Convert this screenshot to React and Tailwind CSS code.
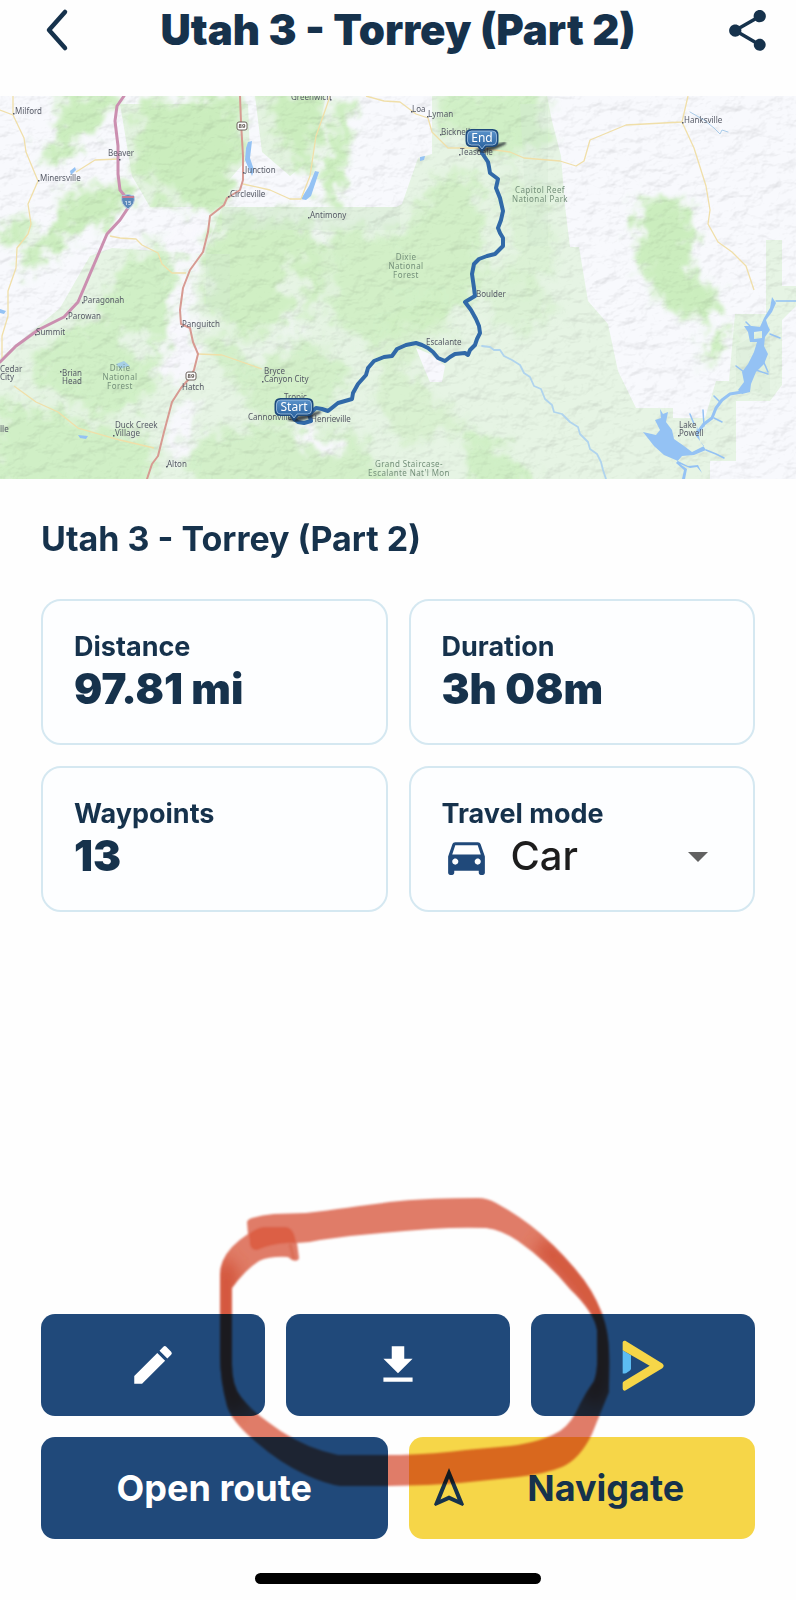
import React, { useState } from 'react';
import {
  MdArrowDropDown,
  MdDirectionsCar,
  MdDownload,
  MdEdit,
  MdOutlineNavigation,
  MdShare,
} from 'react-icons/md';

const ROUTE_NAME = 'Utah 3 - Torrey (Part 2)';

const stats = [
  { label: 'Distance', value: '97.81 mi' },
  { label: 'Duration', value: '3h 08m' },
  { label: 'Waypoints', value: '13' },
];

const towns = [
  { x: 15, y: 18, name: 'Milford' },
  { x: 40, y: 85, name: 'Minersville' },
  { x: 108, y: 60, name: 'Beaver' },
  { x: 291, y: 4, name: 'Greenwich' },
  { x: 245, y: 77, name: 'Junction' },
  { x: 230, y: 101, name: 'Circleville' },
  { x: 310, y: 122, name: 'Antimony' },
  { x: 412, y: 16, name: 'Loa' },
  { x: 428, y: 21, name: 'Lyman' },
  { x: 441, y: 39, name: 'Bicknell' },
  { x: 460, y: 59, name: 'Teasdale' },
  { x: 684, y: 27, name: 'Hanksville' },
  { x: 83, y: 207, name: 'Paragonah' },
  { x: 68, y: 223, name: 'Parowan' },
  { x: 36, y: 239, name: 'Summit' },
  { x: 0, y: 276, name: 'Cedar' },
  { x: 0, y: 284, name: 'City' },
  { x: 62, y: 280, name: 'Brian' },
  { x: 62, y: 288, name: 'Head' },
  { x: 182, y: 231, name: 'Panguitch' },
  { x: 182, y: 294, name: 'Hatch' },
  { x: 264, y: 278, name: 'Bryce' },
  { x: 264, y: 286, name: 'Canyon City' },
  { x: 284, y: 304, name: 'Tropic' },
  { x: 248, y: 324, name: 'Cannonville' },
  { x: 311, y: 326, name: 'Henrieville' },
  { x: 115, y: 332, name: 'Duck Creek' },
  { x: 115, y: 340, name: 'Village' },
  { x: 0, y: 336, name: 'lle' },
  { x: 167, y: 371, name: 'Alton' },
  { x: 476, y: 201, name: 'Boulder' },
  { x: 426, y: 249, name: 'Escalante' },
  { x: 679, y: 332, name: 'Lake' },
  { x: 679, y: 340, name: 'Powell' },
];

const parks = [
  { x: 120, y: 275, name: 'Dixie' },
  { x: 120, y: 284, name: 'National' },
  { x: 120, y: 293, name: 'Forest' },
  { x: 406, y: 164, name: 'Dixie' },
  { x: 406, y: 173, name: 'National' },
  { x: 406, y: 182, name: 'Forest' },
  { x: 540, y: 97, name: 'Capitol Reef' },
  { x: 540, y: 106, name: 'National Park' },
  { x: 409, y: 371, name: 'Grand Staircase-' },
  { x: 409, y: 380, name: "Escalante Nat'l Mon" },
];

const townDots = [
  [13, 17], [38, 84], [119, 63], [243, 76], [228, 100], [308, 121], [411, 15], [427, 20],
  [440, 38], [459, 58], [682, 26], [82, 206], [66, 222], [35, 238], [60, 275], [181, 230],
  [262, 285], [113, 339], [166, 370], [678, 339], [330, 3],
];

function Marker({ x, y, width, text }) {
  const half = width / 2;
  return (
    <g transform={`translate(${x} ${y})`}>
      <path d={`M-6 1 L${half + 8} -6 L${half - 2} -1 L2 3 Z`} fill="#1e242b" stroke="#1e242b" strokeWidth="2" opacity="0.8" filter="url(#soft1)" />
      <path
        d={`M${-half + 5} -19 H${half - 5} Q${half} -19 ${half} -14 V-8 Q${half} -3 ${half - 5} -3 H4 L0 2 L-4 -3 H${-half + 5} Q${-half} -3 ${-half} -8 V-14 Q${-half} -19 ${-half + 5} -19 Z`}
        fill="url(#pin)"
        stroke="#1d4a7c"
        strokeWidth="2"
      />
      <path d={`M${-half + 5} -18 H${half - 5} Q${half - 1} -18 ${half - 1} -14 V-8 Q${half - 1} -4 ${half - 5} -4 H3 L0 0 L-3 -4 H${-half + 5} Q${-half + 1} -4 ${-half + 1} -8 V-14 Q${-half + 1} -18 ${-half + 5} -18 Z`} fill="none" stroke="#a9c8e6" strokeWidth="0.8" />
      <text y="-7" textAnchor="middle" fontSize="12" fill="#fff">{text}</text>
    </g>
  );
}

function RouteMap() {
  return (
    <svg viewBox="0 0 796 383" className="block h-auto w-full font-['Noto_Sans',sans-serif]" role="img" aria-label="Route map">
      <defs>
        <linearGradient id="pin" x1="0" y1="0" x2="0" y2="1">
          <stop offset="0" stopColor="#5b93cb" />
          <stop offset="1" stopColor="#225a97" />
        </linearGradient>
        <filter id="soft1"><feGaussianBlur stdDeviation="0.8" /></filter>
        <filter id="ragged" x="-10%" y="-10%" width="120%" height="120%">
          <feGaussianBlur in="SourceGraphic" stdDeviation="5" result="b" />
          <feTurbulence type="fractalNoise" baseFrequency="0.06" numOctaves="4" seed="8" result="n" />
          <feDisplacementMap in="b" in2="n" scale="40" xChannelSelector="R" yChannelSelector="G" />
          <feGaussianBlur stdDeviation="0.8" />
        </filter>
        <filter id="relief" x="0" y="0" width="100%" height="100%" colorInterpolationFilters="sRGB">
          <feTurbulence type="fractalNoise" baseFrequency="0.05 0.08" numOctaves="4" seed="21" />
          <feColorMatrix values="0 0 0 0 0  0 0 0 0 0  0 0 0 0 0  1 0 0 0 0" />
          <feDiffuseLighting surfaceScale="4" diffuseConstant="1.15" lightingColor="#ffffff">
            <feDistantLight azimuth="225" elevation="60" />
          </feDiffuseLighting>
        </filter>
      </defs>

      <rect width="796" height="383" fill="#f8f9fd" />

      {/* Protected land */}
      <path
        d="M222 111 H396 L402 108 L418 62 L432 58 V0 H547 L552 25 L561 60 L565 110 L570 151 H579 L588 205 L608 228 L618 275 L636 312 H673 V322 H705 L716 285 H729 L735 218 H766 V144 H782 V190 H796 V210 L782 224 V289 L770 305 H736 V365 H710 V383 H0 V262 L60 212 L90 160 L112 152 L205 158 Z"
        fill="#e6f4e4"
      />
      <path d="M120 8 H248 L250 60 L222 92 L225 111 H150 L132 80 Z M255 0 H326 L312 62 L290 80 L262 56 Z" fill="#e4f3e1" />

      {/* Forest */}
      <g fill="#cbedbe" filter="url(#ragged)">
        <path d="M58 -8 L120 -6 L98 28 L78 52 L48 72 L40 52 L60 40 Z" />
        <path d="M136 4 L234 -6 L242 50 L230 86 L224 112 L188 112 L154 92 L134 62 L142 40 Z" />
        <path d="M264 -6 H328 L318 52 L306 76 L282 56 L274 34 Z" />
        <path d="M334 12 L352 2 L344 92 L324 114 L318 96 Z" />
        <path d="M66 96 L120 86 L138 96 L118 118 L84 138 L50 158 L30 180 L20 160 L54 128 Z" />
        <path d="M2 128 L28 122 L32 138 L4 150 Z" />
        <path d="M128 160 L160 146 L182 166 L176 200 L160 250 L150 300 L110 320 L60 300 L28 278 L58 240 L98 220 Z" opacity="0.8" />
        <path d="M222 120 L300 122 L330 160 L322 210 L250 240 L210 214 L204 160 Z" opacity="0.85" />
        <path d="M330 130 L400 140 L440 76 L484 90 L480 200 L420 230 L370 250 L336 230 Z" opacity="0.75" />
        <path d="M436 -6 L542 -6 L548 46 L500 60 L450 36 Z" opacity="0.8" />
        <path d="M500 64 L548 100 L556 170 L520 200 L504 130 Z" opacity="0.4" />
        <path d="M200 240 L330 250 L350 290 L300 320 L200 340 L186 380 L210 395 L400 395 L350 330 L270 330 Z" opacity="0.7" />
        <path d="M-5 300 L90 326 L150 340 L150 395 L-5 395 Z" opacity="0.8" />
        <path d="M396 210 L440 200 L450 240 L400 260 L440 310 L470 330 L400 350 L370 290 Z" opacity="0.5" />
        <path d="M462 335 L500 348 L540 395 L470 395 Z" opacity="0.8" />
        <path d="M480 170 L540 180 L560 220 L520 240 L490 220 Z" opacity="0.4" />
        <path d="M638 106 L688 102 L692 160 L694 184 L720 196 L708 226 L676 218 L648 192 L636 150 Z" />
        <path d="M710 240 L730 232 L726 250 L716 266 L702 266 Z" />
      </g>

      {/* Open valleys */}
      <g fill="#f8f8fd" filter="url(#ragged)">
        <path d="M180 148 L196 152 L192 210 L200 250 L184 290 L158 276 L172 230 Z" />
        <path d="M176 304 L196 314 L186 354 L166 362 Z" />
        <path d="M174 130 L202 116 L208 130 L184 156 L158 160 Z" />
        <path d="M298 328 L342 342 L336 360 L298 348 Z" />
        <path d="M236 250 L280 240 L290 262 L250 270 Z" opacity="0.6" />
        <path d="M120 240 L150 238 L152 260 L128 258 Z" opacity="0.6" />
        <path d="M288 150 L304 190 L300 230 L284 240 Z" opacity="0.6" />
        <path d="M310 120 L324 124 L320 142 L306 138 Z" opacity="0.6" />
      </g>
      <path d="M416 252 L430 258 L445 270 L442 286 H430 L424 272 Z" fill="#f8f8fd" />
      <path d="M206 158 V210 L230 226 V158 Z M222 111 H400 V134 H222 Z M520 8 H548 V150 H528 Z M736 290 V250 L770 230 V300 Z" fill="#d5e8d5" opacity="0.35" />

      <rect width="796" height="383" filter="url(#relief)" opacity="0.14" className="mix-blend-multiply" />

      {/* Water */}
      <g fill="#94c2f4">
        <path d="M248 46 L252 45 L250 62 L254 74 L252 80 L245 64 L246 52 Z" />
        <path d="M315 75 L319 76 L311 100 L306 104 L301 103 L309 90 Z" />
        <path d="M70 75 L75 71 L76 74 L71 79 Z" />
        <path d="M116 268 L124 265 L130 270 L120 273 Z" opacity="0.7" />
        <path d="M78 339 L88 340 L86 343 L80 342 Z" />
        <path d="M420 61 L425 60 L424 64 L420 65 Z" />
        <path d="M0 213 L6 215 L4 218 L0 217 Z" />
        <path d="M643 336 L656 339 L660 334 L655 324 L661 322 L660 313 L663 318 L668 316 L666 326 L672 334 L674 343 L684 350 L692 356 L704 350 L696 340 L697 330 L700 345 L706 354 L694 359 L682 360 L676 367 L684 374 L682 383 L685 383 L687 373 L680 368 L690 372 L697 371 L702 377 L698 369 L688 370 L678 365 L664 359 L654 350 Z" />
        <path fillRule="evenodd" d="M772 201 L776 207 L772 216 L766 224 L768 230 L770 234 L765 241 L764 250 L768 258 L764 268 L756 276 L751 288 L750 296 L742 298 L738 294 L744 286 L742 276 L748 268 L754 256 L757 246 L750 246 L748 236 L744 230 L752 230 L760 231 L764 222 L770 212 Z M754 236 L762 235 L762 242 L754 243 Z" />
      </g>
      <g fill="none" stroke="#94c2f4" strokeLinecap="round" strokeLinejoin="round">
        <path d="M742 296 L730 298 L722 304 L716 312 L712 322 L704 328 L698 336" strokeWidth="3" />
        <path d="M746 226 L754 234 M756 274 L768 278 M770 238 L780 242 M744 276 L736 270 M762 262 L768 276 M720 306 L714 300 M704 330 L703 314 M714 322 L722 326 M690 318 L694 328 M776 205 H796 M706 354 L716 358 L724 362" strokeWidth="1.5" />
        <path d="M482 250 L490 251 L494 254 L500 254 L504 260 L512 264 L520 269 L524 277 L530 281 L534 290 L541 293 L545 303 L552 309 L554 316 L562 318 L570 326 L578 331 L580 338 L588 346 L590 353 L597 358 L601 366 L603 374 L606 383" stroke="#b0d4ee" strokeWidth="1.8" />
        <path d="M690 16 L704 24 L714 32 L720 38 L722 34 L728 36" stroke="#a9cbe8" strokeWidth="1" />
      </g>

      {/* County roads */}
      <g fill="none" stroke="#f0dfa9" strokeWidth="1.3" strokeLinejoin="round">
        <path d="M0 14 L13 19 L24 42 L26 56 L38 85 L28 108 L31 128 L28 138 L17 152 L16 172 L8 195 V220 L2 240 V262 M13 0 V18 M76 76 L95 64 L118 63" />
        <path d="M110 140 L120 142 L136 143 L142 149 L158 157 L162 168 L172 177 H186" />
        <path d="M243 88 L270 94 L290 103 L301 103 L310 80 L316 40 L326 12 L330 0 M366 0 L384 5 L400 6 L416 18 L428 22 L432 36 L448 52 L480 52 L510 56 L524 62 L560 65 L576 70 L584 65 L590 44 L626 29 L682 26 L688 0" />
        <path d="M682 26 L694 52 L706 90 L710 114 L708 128 L718 146 L732 156 L746 170 L754 194 M198 258 L222 259 L262 273 M14 290 L36 306 L58 316 L78 332 L120 344 L154 352" />
      </g>

      {/* Highways */}
      <g fill="none" strokeLinejoin="round" strokeLinecap="round">
        <path d="M124 0 L117 10 L115 25 L118 50 L118 78 L120 94 L128 104 M128 112 L120 124 L107 138 L84 192 L78 206 L64 221 L38 234 L16 250 L0 266" stroke="#cb8fb0" strokeWidth="3" />
        <path d="M240 0 L241 26 L243 60 L243 84 L240 94 L227 102 L224 109 L210 120 L208 136 L203 156 L190 174 L183 192 L180 214 L181 228 L190 232 L193 246 L198 258 L194 274 L188 284 L181 292 L172 306 L164 336 L158 360 L152 368 L147 383" stroke="#d79a92" strokeWidth="2" />
      </g>

      {/* Highway shields */}
      <path d="M122 100 Q128 97 134 100 Q136 108 128 113 Q120 108 122 100 Z" fill="#5b88b9" stroke="#b7c9e0" />
      <path d="M122 101 H134" stroke="#c77c94" strokeWidth="2" />
      <text x="128" y="109" textAnchor="middle" fontSize="6" fill="#fff">15</text>
      <g fill="#fff" stroke="#6b625c" strokeWidth="1">
        <rect x="237" y="26" width="10" height="8" rx="2" />
        <rect x="186" y="276" width="10" height="8" rx="2" />
      </g>
      <g fontSize="6" fontWeight="700" textAnchor="middle" fill="#5c534e">
        <text x="242" y="32">89</text>
        <text x="191" y="282">89</text>
      </g>

      <g fontSize="8" fill="#565a66">
        {towns.map(t => <text key={t.name + t.x} x={t.x} y={t.y}>{t.name}</text>)}
        {townDots.map(([x, y]) => <rect key={`${x}-${y}`} x={x} y={y} width="1.5" height="1.5" />)}
      </g>
      <g fontSize="8" fill="#74907a" textAnchor="middle" className="tracking-wider">
        {parks.map(p => <text key={p.name + p.x} x={p.x} y={p.y}>{p.name}</text>)}
      </g>

      {/* Route */}
      <path
        d="M294 323 L298 326 L304 327 L311 325 L309 318 L316 312 L322 313 L328 315 L333 311 L338 307 L345 305 L352 303 L353 297 L358 288 L366 279 L368 272 L374 265 L384 261 L392 260 L397 253 L406 249 L416 247 L422 249 L428 252 L433 256 L438 262 L445 265 L450 261 L455 258 L465 257 L468 259 L470 254 L475 249 L477 243 L480 237 L479 230 L476 223 L471 214 L465 206 L475 200 L474 192 L472 178 L474 168 L479 163 L487 160 L495 158 L503 150 V142 L500 137 L498 132 L501 124 L503 115 L500 102 L496 92 L498 83 L490 77 L489 71 L488 66 L482 57"
        fill="none"
        stroke="#3169a8"
        strokeWidth="4"
        strokeLinejoin="round"
        strokeLinecap="round"
      />

      <Marker x={482} y={53} width={31} text="End" />
      <Marker x={294} y={322} width={37} text="Start" />
    </svg>
  );
}

// Highlighter loop, multiplied over the buttons
function MarkerLoop() {
  const outline =
    'M247 42 Q248 39 252 38 Q262 35 274 34 L306 33 C340 29 370 24 400 21 Q430 18 478 18 Q487 18 496 23 Q520 36 540 53 Q566 76 584 100 Q599 121 605 143 C611 165 609 185 609 212 Q600 234 592 254 Q580 279 562 287 Q545 294 518 297 L460 303 Q424 306 388 306 H340 Q326 304 306 295 Q280 283 256 262 Q232 242 227 226 Q220 200 220 176 V95 Q220 80 232 67 Q240 59 248 54 Z ' +
    'M232 112 V184 Q232 206 241 217 Q252 231 268 242 Q300 267 338 275 H400 Q436 274 466 270 L510 266 Q542 262 560 251 Q572 243 580 224 Q586 212 594 201 Q598 190 597 170 V150 Q594 132 570 109 Q548 82 518 61 Q502 50 486 48 Q460 47 430 49 Q390 52 350 56 L320 60 Q308 63 297 63 L299 78 Q298 82 292 80 L288 77 Q270 76 259 81 Q245 90 232 108 Z';
  return (
    <svg viewBox="0 0 796 420" className="pointer-events-none absolute bottom-0 left-0 h-auto w-full mix-blend-multiply" aria-hidden="true">
      <defs>
        <clipPath id="loop"><path d={outline} clipRule="evenodd" /></clipPath>
        <filter id="soft8" x="-60%" y="-20%" width="220%" height="140%"><feGaussianBlur stdDeviation="8" /></filter>
        <filter id="edge"><feGaussianBlur stdDeviation="0.8" /></filter>
      </defs>
      <g filter="url(#edge)">
        <path d={outline} fill="#e17c67" fillRule="evenodd" />
        <g clipPath="url(#loop)" fill="none" stroke="#d4543a">
          <path d="M232 84 Q224 92 226 110 V190 Q230 214 240 230" strokeWidth="24" filter="url(#soft8)" />
          <path d="M540 64 Q592 108 602 146 V195 L590 222" strokeWidth="22" filter="url(#soft8)" />
        </g>
        <path d="M249 54 Q256 48 264 47 H286 Q294 48 296 63 H288 Q270 64 257 70 Q251 70 250 64 Z" fill="#dd5f45" />
        <path d="M290 64 L294 79" stroke="#d9654c" strokeWidth="3" opacity="0.6" />
      </g>
    </svg>
  );
}

function StatCard({ children }) {
  return (
    <div className="rounded-[20px] border-2 border-[#d5e8f1] bg-[#fdfeff] px-[31px] py-[29px]">
      {children}
    </div>
  );
}

export default function App() {
  const [mode, setMode] = useState('Car');

  return (
    <div className="relative flex min-h-screen flex-col bg-[#fefefe] font-['Inter',sans-serif] text-[#16324c]">
      <header className="flex items-center justify-between px-6 pb-9 leading-[60px]">
        <button type="button" aria-label="Back" className="flex w-[49px] justify-end">
          <svg viewBox="0 0 30 44" className="h-11 w-[30px]" fill="none" stroke="currentColor" strokeWidth="4.5" strokeLinecap="round" strokeLinejoin="round">
            <path d="M22 4 L6 22 L22 40" />
          </svg>
        </button>
        <h1 className="text-[42px] font-black">{ROUTE_NAME}</h1>
        <button type="button" aria-label="Share">
          <MdShare size={49} />
        </button>
      </header>

      <RouteMap />

      <main className="px-[41px] pt-10">
        <h2 className="mb-10 text-[34px] leading-10 font-bold">{ROUTE_NAME}</h2>
        <div className="grid grid-cols-2 gap-[21px]">
          {stats.map(stat => (
            <StatCard key={stat.label}>
              <p className="text-[27px] leading-[34px] font-bold">{stat.label}</p>
              <p className="text-[42px] leading-[50px] font-black">{stat.value}</p>
            </StatCard>
          ))}
          <StatCard>
            <label htmlFor="mode" className="block text-[27px] leading-[34px] font-bold">Travel mode</label>
            <div className="flex h-[50px] items-center text-[#20497a]">
              <MdDirectionsCar size={49} className="shrink-0" />
              <div className="relative ml-5 flex-1">
                <select
                  id="mode"
                  value={mode}
                  onChange={e => setMode(e.target.value)}
                  className="w-full appearance-none bg-transparent text-[40px] leading-[50px] font-medium text-[#1d1d1d] focus:outline-none"
                >
                  <option>Car</option>
                  <option>Bicycle</option>
                  <option>Motorcycle</option>
                </select>
                <MdArrowDropDown size={48} className="pointer-events-none absolute top-px right-0 text-[#616161]" />
              </div>
            </div>
          </StatCard>
        </div>
      </main>

      <footer className="mt-auto px-[41px] pt-10 pb-4">
        <div className="grid grid-cols-3 gap-[21px] text-white">
          <button type="button" aria-label="Edit" className="flex h-[102px] items-center justify-center rounded-[14px] bg-[#20497a]">
            <MdEdit size={50} />
          </button>
          <button type="button" aria-label="Download" className="flex h-[102px] items-center justify-center rounded-[14px] bg-[#20497a]">
            <MdDownload size={50} />
          </button>
          <button type="button" aria-label="Play" className="flex h-[102px] items-center justify-center rounded-[14px] bg-[#20497a]">
            <svg viewBox="676 146 132 158" className="h-[53px] w-11">
              <path d="M681 179 L706 194 V233 Q706 238 702 241 L691 248 Q688 249 681 249 Z" fill="#5cbcf3" />
              <path d="M681 155 Q682 149 689 151 L800 219 Q808 226 800 233 L689 300 Q681 302 681 294 V278 Q681 275 684 273 L762 226 L681 179 Z" fill="#f6d648" />
            </svg>
          </button>
        </div>
        <div className="mt-[21px] grid grid-cols-2 gap-[21px] text-4xl font-bold">
          <button type="button" className="h-[102px] rounded-[14px] bg-[#20497a] text-white">Open route</button>
          <button type="button" className="flex h-[102px] items-center rounded-[14px] bg-[#f6d648] px-4">
            <MdOutlineNavigation size={48} />
            <span className="flex-1">Navigate</span>
          </button>
        </div>
        <div className="mx-auto mt-[34px] h-[11px] w-2/5 rounded-full bg-black" />
      </footer>

      <MarkerLoop />
    </div>
  );
}
